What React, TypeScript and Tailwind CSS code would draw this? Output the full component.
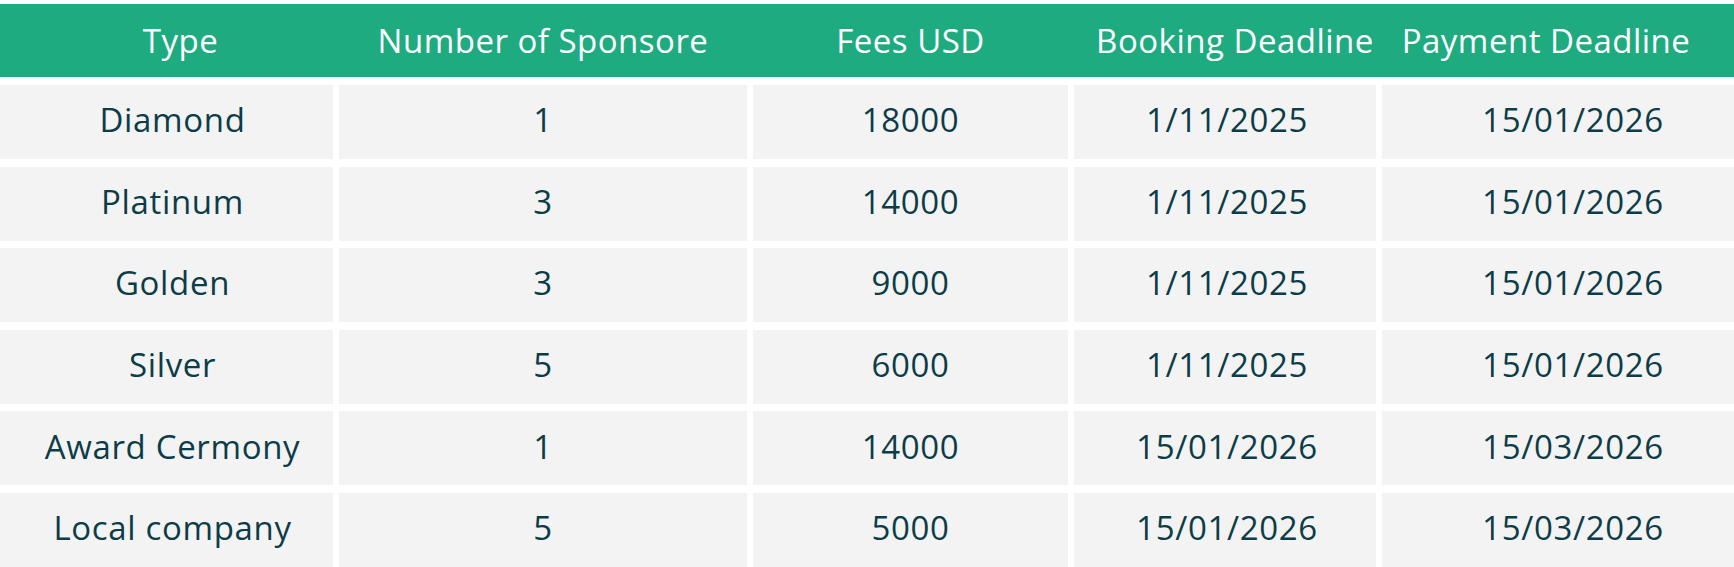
const rows = [
  { type: "Diamond", count: "1", fees: "18000", booking: "1/11/2025", payment: "15/01/2026" },
  { type: "Platinum", count: "3", fees: "14000", booking: "1/11/2025", payment: "15/01/2026" },
  { type: "Golden", count: "3", fees: "9000", booking: "1/11/2025", payment: "15/01/2026" },
  { type: "Silver", count: "5", fees: "6000", booking: "1/11/2025", payment: "15/01/2026" },
  { type: "Award Cermony", count: "1", fees: "14000", booking: "15/01/2026", payment: "15/03/2026" },
  { type: "Local company", count: "5", fees: "5000", booking: "15/01/2026", payment: "15/03/2026" },
];

const cols = "grid grid-cols-[333px_408px_315px_302px_352px] gap-x-[6px]";

export default function App() {
  return (
    <div
      className="w-[1734px] h-[567px] overflow-hidden bg-white pt-[4px]"
      style={{ fontFamily: '"Open Sans", "Noto Sans", sans-serif' }}
    >
      <div className={`${cols} h-[73px] items-center bg-[#1eab7f] text-white text-[33px] tracking-[0.015em] font-normal`}>
        <div className="text-center pl-[28px]">Type</div>
        <div className="text-center whitespace-nowrap">Number of Sponsore</div>
        <div className="text-center">Fees USD</div>
        <div className="text-center pl-[20px] whitespace-nowrap">Booking Deadline</div>
        <div className="text-center pr-[24px] whitespace-nowrap">Payment Deadline</div>
      </div>
      <div className="flex flex-col gap-y-[7.6px] mt-[8px]">
        {rows.map((r, i) => (
          <div key={i} className={`${cols} h-[74px] text-[33px] tracking-[0.02em] font-medium text-[#0c3c48]`}>
            <div className="bg-[#f3f3f3] flex items-center justify-center pl-[12px] pb-[4px] whitespace-nowrap">{r.type}</div>
            <div className="bg-[#f3f3f3] flex items-center justify-center pb-[4px]">{r.count}</div>
            <div className="bg-[#f3f3f3] flex items-center justify-center pb-[4px]">{r.fees}</div>
            <div className="bg-[#f3f3f3] flex items-center justify-center pl-[4px] pb-[4px]">{r.booking}</div>
            <div className="bg-[#f3f3f3] flex items-center justify-center pl-[30px] pb-[4px]">{r.payment}</div>
          </div>
        ))}
      </div>
    </div>
  );
}
